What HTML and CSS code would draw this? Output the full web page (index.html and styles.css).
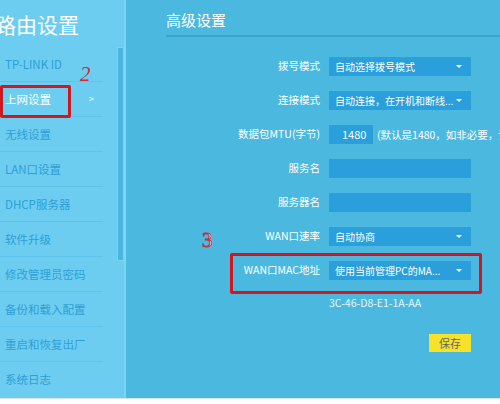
FILE: index.html
```html
<!DOCTYPE html>
<html lang="zh-CN">
<head>
    <meta charset="UTF-8">
    <meta name="viewport" content="width=device-width, initial-scale=1.0">
    <title>路由设置 - 高级设置</title>
    <link rel="stylesheet" href="styles.css">
</head>
<body>

<div class="page">
    <div class="side">
        <div class="side-title">路由设置</div>
        <ul class="menu">
            <li>TP-LINK ID</li>
            <li class="active">上网设置<span class="caret">&gt;</span></li>
            <li>无线设置</li>
            <li>LAN口设置</li>
            <li>DHCP服务器</li>
            <li>软件升级</li>
            <li>修改管理员密码</li>
            <li>备份和载入配置</li>
            <li>重启和恢复出厂</li>
            <li>系统日志</li>
        </ul>
        <div class="scrollbar"></div>
        <div class="mark mark-box1"></div>
        <div class="note note-2">2</div>
    </div>

    <div class="main">
        <h2 class="main-title">高级设置</h2>
        <div class="form">
            <div class="row">
                <label>拨号模式</label>
                <div class="select">自动选择拨号模式<span class="arrow"></span></div>
            </div>
            <div class="row">
                <label>连接模式</label>
                <div class="select">自动连接，在开机和断线...<span class="arrow"></span></div>
            </div>
            <div class="row">
                <label>数据包MTU(字节)</label>
                <div class="inline">
                    <div class="input short">1480</div>
                    <span class="hint">(默认是1480，如非必要，请勿修改)</span>
                </div>
            </div>
            <div class="row">
                <label>服务名</label>
                <div class="input"></div>
            </div>
            <div class="row">
                <label>服务器名</label>
                <div class="input"></div>
            </div>
            <div class="row">
                <label>WAN口速率</label>
                <div class="select">自动协商<span class="arrow"></span></div>
            </div>
            <div class="row">
                <label>WAN口MAC地址</label>
                <div class="select">使用当前管理PC的MA...<span class="arrow"></span></div>
            </div>
            <div class="row row-mac">
                <span></span>
                <div class="mac">3C-46-D8-E1-1A-AA</div>
            </div>
            <div class="row row-save">
                <span></span>
                <div class="actions"><button class="save">保存</button></div>
            </div>
        </div>
        <div class="mark mark-box2"></div>
        <div class="note note-3">3</div>
    </div>
</div>

</body>
</html>
```

FILE: styles.css
```css
body {
    margin: 0;
    width: 500px;
    height: 404px;
    overflow: hidden;
    background: #fff;
    font-family: "Noto Sans CJK SC", "Liberation Sans", sans-serif;
}
.page {
    display: flex;
    height: 398px;
    border-bottom: 1px solid #d6e6ec;
    overflow: hidden;
}

/* left menu */
.side {
    position: relative;
    width: 124px;
    flex-shrink: 0;
    background: #6ccdf0;
    border-right: 2px solid #7ed5f3;
}
.side-title {
    margin-left: -5px;
    height: 47px;
    line-height: 48px;
    font-size: 21px;
    color: #fff;
    white-space: nowrap;
}
.menu {
    list-style: none;
    margin: 0;
    padding: 0;
    width: 103px;
}
.menu li {
    position: relative;
    height: 34px;
    line-height: 34px;
    padding-left: 5px;
    font-size: 11.5px;
    color: #2f9fd6;
    border-bottom: 1px solid #5ec3ea;
    white-space: nowrap;
}
.menu li:last-child {
    border-bottom: none;
}
.menu li.active {
    color: #fff;
}
.caret {
    position: absolute;
    left: 89px;
    font-size: 9px;
}
.scrollbar {
    position: absolute;
    left: 117px;
    top: 47px;
    width: 5px;
    height: 212px;
    background: #4ab6dd;
    border: 1px solid #7cd2f1;
}

/* main panel */
.main {
    position: relative;
    flex: 1;
    background: #4bb9df;
}
.main-title {
    margin: 0 0 0 40px;
    height: 35px;
    line-height: 40px;
    font-size: 15px;
    font-weight: normal;
    color: #fff;
    border-bottom: 2px solid #3ba5d0;
}
.form {
    display: grid;
    grid-template-columns: 194px 142px;
    column-gap: 9px;
    padding-top: 12px;
}
.row {
    display: contents;
}
.row label {
    height: 34px;
    line-height: 34px;
    text-align: right;
    font-size: 10.5px;
    color: #fff;
    white-space: nowrap;
}
.select,
.input {
    position: relative;
    align-self: center;
    height: 19px;
    line-height: 19px;
    padding-left: 6px;
    background: #2a9fdc;
    font-size: 10px;
    color: #fff;
    white-space: nowrap;
}
.arrow {
    position: absolute;
    right: 9px;
    top: 8px;
    border-left: 3px solid transparent;
    border-right: 3px solid transparent;
    border-top: 3px solid #fff;
}
.inline {
    display: flex;
    align-items: center;
    gap: 4px;
    white-space: nowrap;
}
.input.short {
    flex-shrink: 0;
    box-sizing: border-box;
    width: 44px;
    padding-left: 13px;
    overflow: hidden;
    font-size: 11px;
}
.hint {
    font-size: 10.5px;
    color: #fff;
}
.mac {
    height: 32px;
    line-height: 32px;
    font-size: 10.5px;
    color: #e6f6fc;
}
.actions {
    display: flex;
    justify-content: flex-end;
    padding-top: 15px;
}
.save {
    width: 42px;
    height: 18px;
    padding: 0;
    border: none;
    background: #f6e22b;
    font-family: inherit;
    font-size: 11px;
    color: #666;
}

/* hand-drawn marks over the screenshot */
.mark {
    position: absolute;
    border: 3px solid #cf1820;
    border-radius: 2px;
}
.mark-box1 {
    left: 0;
    top: 85px;
    width: 65px;
    height: 27px;
}
.mark-box2 {
    left: 104px;
    top: 253px;
    width: 246px;
    height: 35px;
}
.note {
    position: absolute;
    font-family: "Liberation Serif", serif;
    font-size: 21px;
    line-height: 1;
}
.note-2 {
    left: 80px;
    top: 64px;
    color: #d02a35;
    font-style: italic;
}
.note-3 {
    left: 76px;
    top: 230px;
    color: #fff;
    -webkit-text-stroke: 1px #b8344a;
}
```
